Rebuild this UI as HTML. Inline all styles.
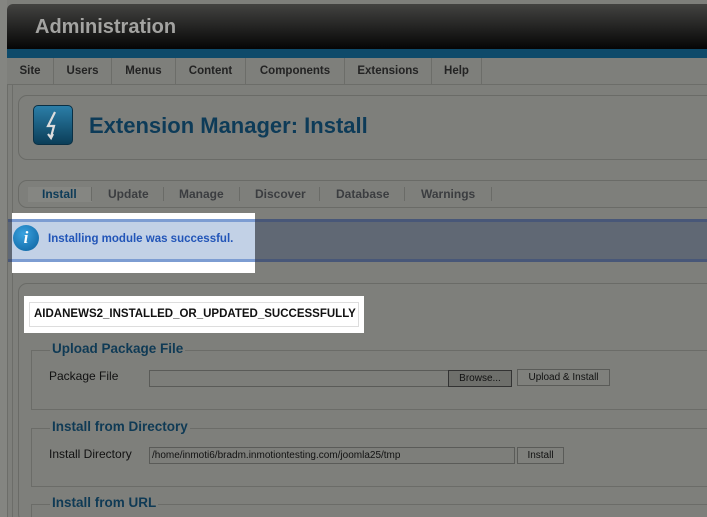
<!DOCTYPE html>
<html style="width:707px;height:517px;overflow:hidden"><head><style>
*{margin:0;padding:0;box-sizing:border-box}
body{width:707px;height:517px;overflow:hidden;background:#7e7f7b;font-family:"Liberation Sans",Arial,sans-serif;position:relative}
.a{position:absolute}
.hdr{left:7px;top:4px;width:700px;height:46px;background:linear-gradient(#434341,#040404);border-radius:6px 0 0 0}
.hdr span{position:absolute;left:28px;top:12px;font-size:20px;font-weight:bold;color:#a3a3a1}
.strip{left:7px;top:49px;width:700px;height:9px;background:#0e4a6a}
.menu{left:7px;top:58px;width:700px;height:27px;border-bottom:1px solid #6c6d69;font-size:11.5px;font-weight:bold;color:#232323}
.menu div{position:absolute;top:0;height:27px;line-height:27px;border-right:1px solid #6c6d69;text-align:center}
.panel{border:1px solid #6a6b67;border-radius:9px}
.tabs{font-size:12px;font-weight:bold;color:#3b3d40}
.tabs span{position:absolute;top:0;line-height:26px}
.sep{position:absolute;top:6px;width:1px;height:14px;background:#6a6b67}
.fs{position:absolute;border:1px solid #6b6c68;border-right:none}
.lg{position:absolute;top:-10px;left:18px;background:#7e7f7b;color:#0f3a55;font-size:13.5px;font-weight:bold;padding:0 2px;white-space:nowrap}
.lbl{font-size:12px;color:#111}
.inp{border:1px solid #5a5b58;background:#7d7e7a}
.btn{border:1px solid #5a5b58;background:#7f807c;font-size:10px;color:#111;text-align:center}
</style></head><body>
<div class="a" style="left:0;top:0;width:7px;height:517px;background:#848581"></div>
<div class="a hdr"><span>Administration</span></div>
<div class="a strip"></div>
<div class="a menu">
<div style="left:0;width:47px">Site</div>
<div style="left:47px;width:58px">Users</div>
<div style="left:105px;width:64px">Menus</div>
<div style="left:169px;width:70px">Content</div>
<div style="left:239px;width:99px">Components</div>
<div style="left:338px;width:87px">Extensions</div>
<div style="left:425px;width:50px">Help</div>
</div>
<div class="a" style="left:7px;top:84px;width:1px;height:433px;background:#6c6d69"></div>
<div class="a" style="left:12px;top:84px;width:1px;height:433px;background:#6c6d69"></div>
<div class="a panel" style="left:18px;top:95px;width:700px;height:65px"></div>
<div class="a" style="left:33px;top:105px;width:40px;height:40px;border-radius:5px;background:linear-gradient(#2b7ea8,#0b3e58);border:1px solid #0a3045"></div>
<svg class="a" style="left:33px;top:105px" width="40" height="40"><path d="M22 7 L15 21 L21 21 L18 32 M15 29 L18 33 L20 29" fill="none" stroke="#ddd" stroke-width="2.2"/></svg>
<div class="a" style="left:89px;top:113px;font-size:22px;font-weight:bold;color:#0d3b58">Extension Manager: Install</div>
<div class="a panel tabs" style="left:18px;top:180px;width:700px;height:28px">
<div class="a" style="left:9px;top:6px;width:64px;height:15px;background:#858682"></div>
<span style="left:23px;color:#0d3b58">Install</span><div class="sep" style="left:72px"></div>
<span style="left:89px">Update</span><div class="sep" style="left:144px"></div>
<span style="left:160px">Manage</span><div class="sep" style="left:220px"></div>
<span style="left:236px">Discover</span><div class="sep" style="left:300px"></div>
<span style="left:317px">Database</span><div class="sep" style="left:385px"></div>
<span style="left:402px">Warnings</span><div class="sep" style="left:472px"></div>
</div>
<div class="a" style="left:8px;top:219px;width:699px;height:43px;background:#606874;border-top:3px solid #485778;border-bottom:3px solid #485778"></div>
<div class="a" style="left:12px;top:213px;width:243px;height:60px;background:#fff"></div>
<div class="a" style="left:12px;top:219px;width:243px;height:43px;background:#c2d1e6;border-top:3px solid #7d9dd2;border-bottom:3px solid #7d9dd2"></div>
<div class="a" style="left:13px;top:225px;width:26px;height:26px;border-radius:50%;background:radial-gradient(circle at 40% 35%,#3aa3e0,#0b5f9c);color:#fff;font:italic bold 17px 'Liberation Serif',serif;text-align:center;line-height:26px">i</div>
<div class="a" style="left:48px;top:233px;font-size:11.5px;font-weight:bold;color:#2255b8">Installing module was successful.</div>
<div class="a panel" style="left:18px;top:283px;width:700px;height:240px"></div>
<div class="a" style="left:24px;top:296px;width:340px;height:37px;background:#fff"></div>
<div class="a" style="left:29px;top:302px;width:330px;height:25px;border:1px solid #ddd"></div>
<div class="a" style="left:34px;top:308px;font-size:11.5px;font-weight:bold;color:#111">AIDANEWS2_INSTALLED_OR_UPDATED_SUCCESSFULLY</div>
<div class="fs" style="left:31px;top:350px;width:690px;height:60px"><div class="lg">Upload Package File</div></div>
<div class="a lbl" style="left:49px;top:369px">Package File</div>
<div class="a inp" style="left:149px;top:370px;width:300px;height:17px"></div>
<div class="a btn" style="left:448px;top:370px;width:64px;height:17px;line-height:16px;background:#6e6f6b;border-color:#333">Browse...</div>
<div class="a btn" style="left:517px;top:369px;width:93px;height:17px;line-height:15px">Upload &amp; Install</div>
<div class="fs" style="left:31px;top:428px;width:690px;height:59px"><div class="lg">Install from Directory</div></div>
<div class="a lbl" style="left:49px;top:447px">Install Directory</div>
<div class="a inp" style="left:149px;top:447px;width:366px;height:17px;font-size:10px;color:#111;line-height:15px;padding-left:2px;overflow:hidden;white-space:nowrap">/home/inmoti6/bradm.inmotiontesting.com/joomla25/tmp</div>
<div class="a btn" style="left:517px;top:447px;width:47px;height:17px;line-height:15px">Install</div>
<div class="fs" style="left:31px;top:504px;width:676px;height:13px;border-bottom:none"><div class="lg">Install from URL</div></div>
</body></html>
